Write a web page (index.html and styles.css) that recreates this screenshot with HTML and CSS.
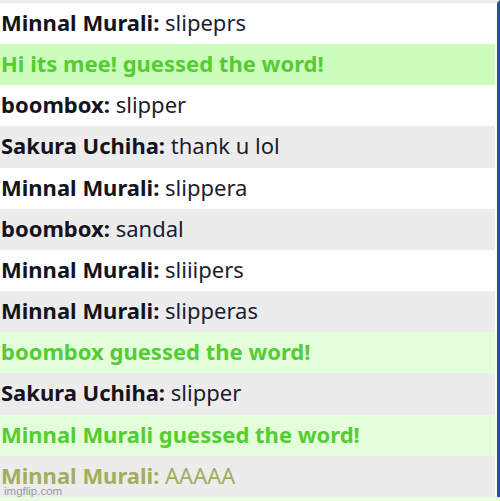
FILE: index.html
```html
<!DOCTYPE html>
<html lang="en">
<head>
  <meta charset="UTF-8">
  <title>Chat</title>
  <link rel="stylesheet" href="styles.css">
</head>
<body>
  <div class="chat">
    <div class="msg light"><b>Minnal Murali:</b> slipeprs</div>
    <div class="msg you-guessed"><b>Hi its mee! guessed the word!</b></div>
    <div class="msg light"><b>boombox:</b> slipper</div>
    <div class="msg dark"><b>Sakura Uchiha:</b> thank u lol</div>
    <div class="msg light"><b>Minnal Murali:</b> slippera</div>
    <div class="msg dark"><b>boombox:</b> sandal</div>
    <div class="msg light"><b>Minnal Murali:</b> sliiipers</div>
    <div class="msg dark"><b>Minnal Murali:</b> slipperas</div>
    <div class="msg guessed"><b>boombox guessed the word!</b></div>
    <div class="msg dark"><b>Sakura Uchiha:</b> slipper</div>
    <div class="msg guessed"><b>Minnal Murali guessed the word!</b></div>
    <div class="msg dark close"><b>Minnal Murali:</b> AAAAA</div>
  </div>
  <div class="watermark">imgflip.com</div>
</body>
</html>
```

FILE: styles.css
```css
body {
  margin: 0;
  background: #e6ffdd;
  font-family: "Noto Sans", "Open Sans", sans-serif;
  position: relative;
  height: 501px;
  overflow: hidden;
}
.chat {
  border-top: 3px solid #ececec;
  border-right: 3px solid #2a4f9a;
  padding-right: 2px;
  background: #fff;
  height: 497px;
  box-sizing: border-box;
}
.msg {
  height: 41.17px;
  line-height: 38px;
  font-size: 22px;
  color: #1c1c2e;
  padding-left: 1px;
  white-space: nowrap;
}
.msg b {
  font-weight: 700;
  color: #141420;
}
.light {
  background: #fff;
}
.dark {
  background: #ececec;
}
.you-guessed {
  background: #ccfdbc;
}
.guessed {
  background: #e4fedc;
}
.you-guessed b,
.guessed b {
  color: #55cc33;
}
.close,
.close b {
  color: #a3ad5e;
}
.watermark {
  position: absolute;
  left: 4px;
  bottom: 4px;
  font-family: "Liberation Sans", sans-serif;
  font-size: 11.5px;
  color: #999;
}
```
